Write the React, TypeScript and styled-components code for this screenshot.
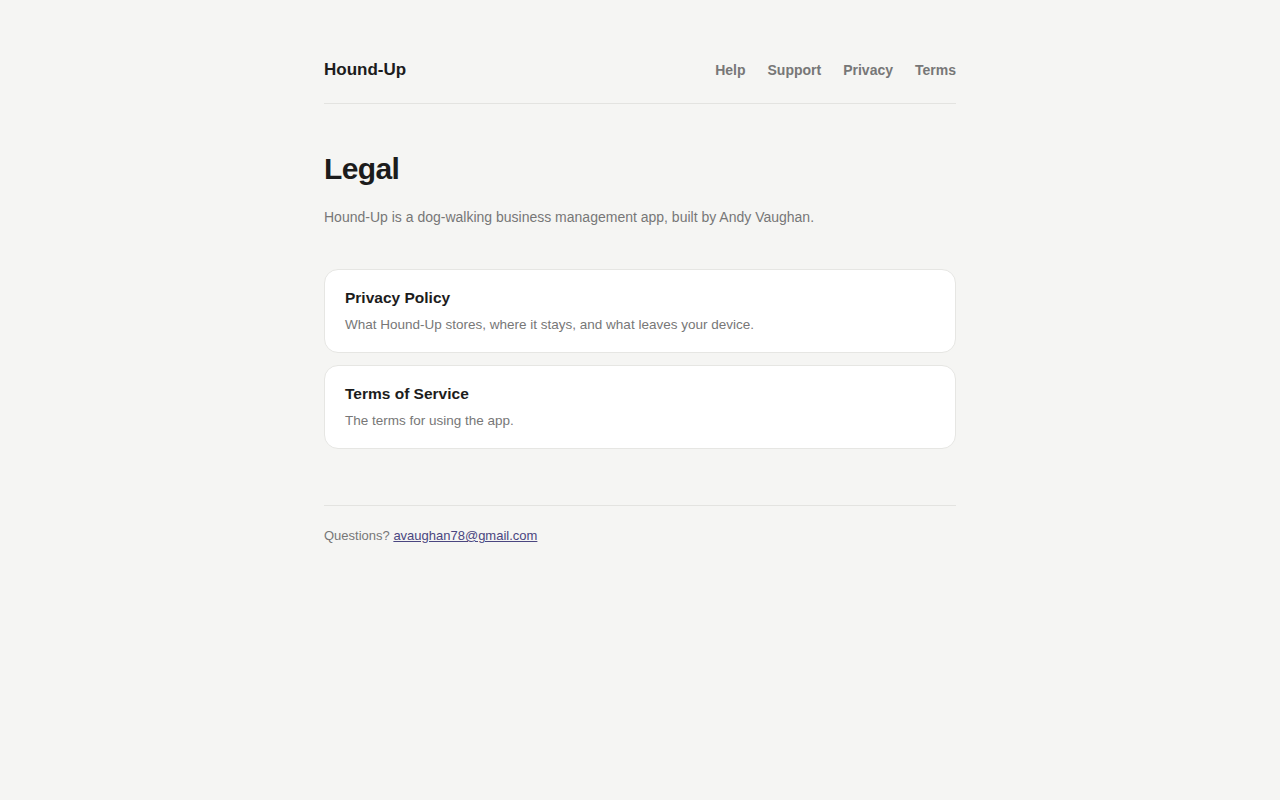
import React from "react";
import styled, { createGlobalStyle } from "styled-components";

const GlobalStyle = createGlobalStyle`
  html, body {
    margin: 0;
    padding: 0;
    background: #f5f5f3;
  }
  body {
    font-family: "Liberation Sans", Arial, sans-serif;
    color: #1c1c1c;
    -webkit-font-smoothing: antialiased;
  }
`;

const Page = styled.div`
  max-width: 632px;
  margin: 0 auto;
  padding: 58px 0 80px;
`;

const Header = styled.header`
  display: flex;
  align-items: center;
  justify-content: space-between;
  padding-bottom: 21px;
  border-bottom: 1px solid #e3e3e0;
`;

const Logo = styled.a`
  font-size: 17px;
  font-weight: 700;
  color: #1c1c1c;
  text-decoration: none;
  line-height: 24px;
`;

const Nav = styled.nav`
  display: flex;
  gap: 22px;
`;

const NavLink = styled.a`
  font-size: 14px;
  font-weight: 700;
  color: #777;
  text-decoration: none;
`;

const Main = styled.main`
  padding-top: 47px;
`;

const Title = styled.h1`
  margin: 0;
  font-size: 30px;
  font-weight: 700;
  letter-spacing: -0.02em;
  line-height: 36px;
`;

const Lead = styled.p`
  margin: 19px 0 0;
  font-size: 14px;
  line-height: 22px;
  color: #777;
`;

const CardList = styled.div`
  display: flex;
  flex-direction: column;
  gap: 12px;
  margin-top: 41px;
`;

const Card = styled.a`
  display: block;
  background: #fff;
  border: 1px solid #e6e6e3;
  border-radius: 14px;
  padding: 18px 20px 17px;
  text-decoration: none;
`;

const CardTitle = styled.div`
  font-size: 15.5px;
  font-weight: 700;
  color: #1c1c1c;
  line-height: 20px;
`;

const CardText = styled.div`
  margin-top: 7px;
  font-size: 13.5px;
  line-height: 20px;
  color: #777;
`;

const Footer = styled.footer`
  margin-top: 56px;
  padding-top: 21px;
  border-top: 1px solid #e3e3e0;
  font-size: 13px;
  line-height: 18px;
  color: #777;
`;

const Mail = styled.a`
  color: #4a4680;
  text-decoration: underline;
`;

const cards = [
  {
    title: "Privacy Policy",
    text: "What Hound-Up stores, where it stays, and what leaves your device.",
  },
  { title: "Terms of Service", text: "The terms for using the app." },
];

export default function App() {
  return (
    <>
      <GlobalStyle />
      <Page>
        <Header>
          <Logo href="#">Hound-Up</Logo>
          <Nav>
            <NavLink href="#">Help</NavLink>
            <NavLink href="#">Support</NavLink>
            <NavLink href="#">Privacy</NavLink>
            <NavLink href="#">Terms</NavLink>
          </Nav>
        </Header>
        <Main>
          <Title>Legal</Title>
          <Lead>
            Hound-Up is a dog-walking business management app, built by Andy
            Vaughan.
          </Lead>
          <CardList>
            {cards.map((c) => (
              <Card href="#" key={c.title}>
                <CardTitle>{c.title}</CardTitle>
                <CardText>{c.text}</CardText>
              </Card>
            ))}
          </CardList>
          <Footer>
            Questions? <Mail href="#">avaughan78@gmail.com</Mail>
          </Footer>
        </Main>
      </Page>
    </>
  );
}
